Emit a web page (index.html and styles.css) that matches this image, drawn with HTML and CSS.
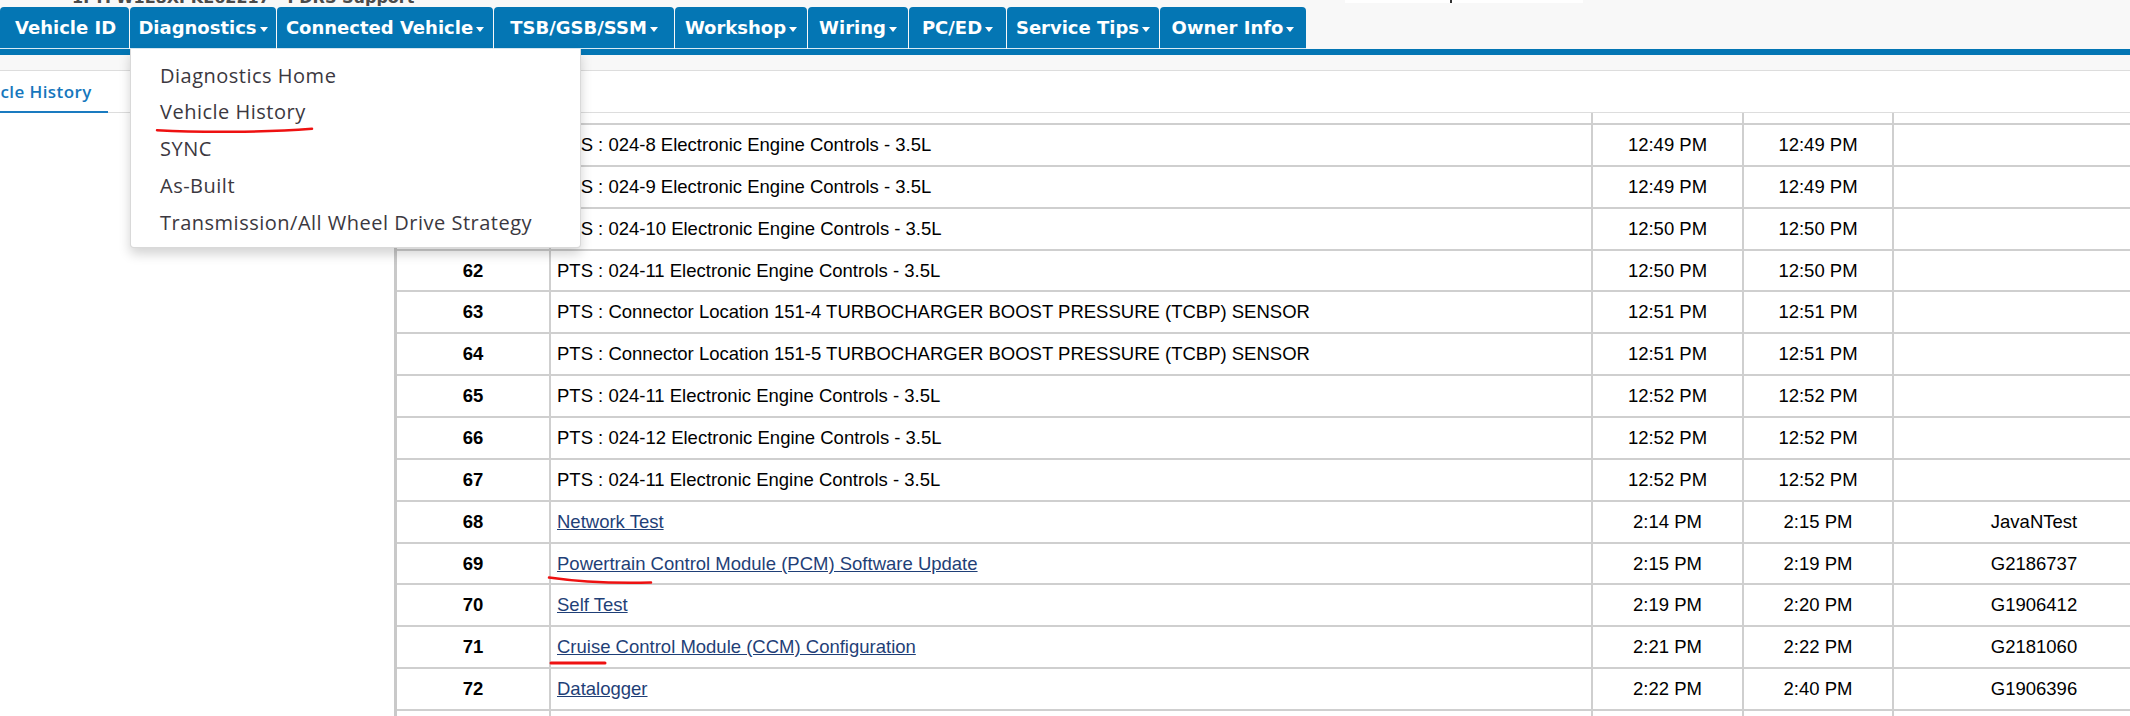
FILE: index.html
```html
<!DOCTYPE html>
<html lang="en">
<head>
<meta charset="utf-8">
<title>Vehicle History</title>
<link rel="stylesheet" href="styles.css">
</head>
<body>
<div class="page">
  <header class="top">
    <div class="topline">
      <span class="vin">1FTFW1E8XPKE62217 - PDRS Support</span>
      <span class="searchbox"></span>
    </div>
    <nav class="mainnav">
      <div class="tab first t-vid">Vehicle ID</div>
      <div class="tab open t-diag">Diagnostics<span class="caret"></span>
        <ul class="menu">
          <li>Diagnostics Home</li>
          <li>Vehicle History</li>
          <li>SYNC</li>
          <li>As-Built</li>
          <li>Transmission/All Wheel Drive Strategy</li>
        </ul>
      </div>
      <div class="tab t-conn">Connected Vehicle<span class="caret"></span></div>
      <div class="tab t-tsb">TSB/GSB/SSM<span class="caret"></span></div>
      <div class="tab t-work">Workshop<span class="caret"></span></div>
      <div class="tab t-wir">Wiring<span class="caret"></span></div>
      <div class="tab t-pced">PC/ED<span class="caret"></span></div>
      <div class="tab t-tips">Service Tips<span class="caret"></span></div>
      <div class="tab t-owner">Owner Info<span class="caret"></span></div>
    </nav>
    <div class="navrule"></div>
    <div class="subbar"></div>
  </header>

  <div class="tabstrip">
    <a class="subtab">Vehicle History</a>
  </div>

  <main class="content">
    <div class="side"></div>
    <div class="tablewrap">
      <table class="history">
        <colgroup>
          <col class="c-num"><col class="c-desc"><col class="c-time"><col class="c-time2"><col class="c-id">
        </colgroup>
        <tbody>
          <tr><td class="num">58</td><td class="desc">PTS : 024-7 Electronic Engine Controls - 3.5L</td><td>12:48 PM</td><td>12:48 PM</td><td></td></tr>
          <tr><td class="num">59</td><td class="desc">PTS : 024-8 Electronic Engine Controls - 3.5L</td><td>12:49 PM</td><td>12:49 PM</td><td></td></tr>
          <tr><td class="num">60</td><td class="desc">PTS : 024-9 Electronic Engine Controls - 3.5L</td><td>12:49 PM</td><td>12:49 PM</td><td></td></tr>
          <tr><td class="num">61</td><td class="desc">PTS : 024-10 Electronic Engine Controls - 3.5L</td><td>12:50 PM</td><td>12:50 PM</td><td></td></tr>
          <tr><td class="num">62</td><td class="desc">PTS : 024-11 Electronic Engine Controls - 3.5L</td><td>12:50 PM</td><td>12:50 PM</td><td></td></tr>
          <tr><td class="num">63</td><td class="desc">PTS : Connector Location 151-4 TURBOCHARGER BOOST PRESSURE (TCBP) SENSOR</td><td>12:51 PM</td><td>12:51 PM</td><td></td></tr>
          <tr><td class="num">64</td><td class="desc">PTS : Connector Location 151-5 TURBOCHARGER BOOST PRESSURE (TCBP) SENSOR</td><td>12:51 PM</td><td>12:51 PM</td><td></td></tr>
          <tr><td class="num">65</td><td class="desc">PTS : 024-11 Electronic Engine Controls - 3.5L</td><td>12:52 PM</td><td>12:52 PM</td><td></td></tr>
          <tr><td class="num">66</td><td class="desc">PTS : 024-12 Electronic Engine Controls - 3.5L</td><td>12:52 PM</td><td>12:52 PM</td><td></td></tr>
          <tr><td class="num">67</td><td class="desc">PTS : 024-11 Electronic Engine Controls - 3.5L</td><td>12:52 PM</td><td>12:52 PM</td><td></td></tr>
          <tr><td class="num">68</td><td class="desc"><a class="rec">Network Test</a></td><td>2:14 PM</td><td>2:15 PM</td><td>JavaNTest</td></tr>
          <tr><td class="num">69</td><td class="desc"><a class="rec">Powertrain Control Module (PCM) Software Update</a></td><td>2:15 PM</td><td>2:19 PM</td><td>G2186737</td></tr>
          <tr><td class="num">70</td><td class="desc"><a class="rec">Self Test</a></td><td>2:19 PM</td><td>2:20 PM</td><td>G1906412</td></tr>
          <tr><td class="num">71</td><td class="desc"><a class="rec">Cruise Control Module (CCM) Configuration</a></td><td>2:21 PM</td><td>2:22 PM</td><td>G2181060</td></tr>
          <tr><td class="num">72</td><td class="desc"><a class="rec">Datalogger</a></td><td>2:22 PM</td><td>2:40 PM</td><td>G1906396</td></tr>
          <tr><td class="num">73</td><td class="desc"><a class="rec">Self Test</a></td><td>2:41 PM</td><td>2:42 PM</td><td>G1906396</td></tr>
        </tbody>
      </table>
    </div>
  </main>

  <svg class="marks" width="2130" height="716" viewBox="0 0 2130 716" aria-hidden="true">
    <path d="M157 130.2 C 200 132.6, 262 132.6, 312 128.8" />
    <path d="M549 577.6 C 574 581.2, 612 583.6, 651 582.6" />
    <path class="thick" d="M551 663 L 605 663" />
  </svg>
</div>
</body>
</html>
```

FILE: styles.css
```css
html, body {
  margin: 0;
  padding: 0;
}

body {
  width: 2130px;
  height: 716px;
  overflow: hidden;
  background: #ffffff;
  font-family: "Liberation Sans", Arial, sans-serif;
}

.page {
  position: relative;
  height: 716px;
  overflow: hidden;
}

/* ---------- header ---------- */
.top {
  background: #f8f8f8;
}

.topline {
  height: 7px;
  overflow: hidden;
  display: flex;
  align-items: flex-start;
}

.vin {
  display: block;
  flex: none;
  width: 1345px;
  padding-left: 72px;
  box-sizing: border-box;
  margin-top: -12px;
  font: bold 16px/20px "DejaVu Sans", Verdana, sans-serif;
  color: #4a4a4a;
  white-space: nowrap;
}

.searchbox {
  display: block;
  flex: none;
  width: 238px;
  height: 3px;
  background: linear-gradient(#333, #333) 105px 0 / 2px 3px no-repeat, #ffffff;
}

.mainnav {
  display: flex;
  height: 42px;
}

.tab {
  position: relative;
  display: flex;
  align-items: center;
  justify-content: center;
  flex: none;
  box-sizing: border-box;
  height: 42px;
  padding: 0;
  margin-right: 1px;
  background: #0476b4;
  color: #ffffff;
  font: bold 18px "DejaVu Sans", Verdana, sans-serif;
  border-radius: 4px 4px 0 0;
  border-bottom: 1px solid rgba(255, 255, 255, 0.85);
  white-space: nowrap;
}

.tab.first {
  justify-content: flex-start;
  padding-left: 15px;
}

.t-vid { width: 129px; }
.t-diag { width: 146px; }
.t-conn { width: 216px; }
.t-tsb { width: 180px; }
.t-work { width: 132px; }
.t-wir { width: 100px; }
.t-pced { width: 97px; }
.t-tips { width: 152px; }
.t-owner { width: 146px; }

.caret {
  display: inline-block;
  width: 0;
  height: 0;
  margin-left: 3px;
  margin-top: 4px;
  border-top: 5px solid #ffffff;
  border-left: 4.5px solid transparent;
  border-right: 4.5px solid transparent;
}

.menu {
  position: absolute;
  top: calc(100% + 1px);
  left: 0;
  z-index: 10;
  width: 451px;
  box-sizing: border-box;
  margin: 0;
  padding: 8.5px 0 6px;
  list-style: none;
  background: #ffffff;
  border: 1px solid rgba(0, 0, 0, 0.15);
  border-top: 0;
  border-radius: 0 0 4px 4px;
  box-shadow: 0 6px 12px rgba(0, 0, 0, 0.175);
  font: 400 20px/36.8px "Open Sans", sans-serif;
  letter-spacing: 0.5px;
  color: #3b3840;
}

.menu li {
  padding-left: 29px;
}

.navrule {
  height: 6px;
  background: #0476b4;
}

.subbar {
  height: 15px;
  border-bottom: 1px solid #dddddd;
}

/* ---------- page tabs ---------- */
.tabstrip {
  display: flex;
  height: 41px;
  background: #ffffff;
  border-bottom: 1px solid #dddddd;
}

.subtab {
  display: flex;
  align-items: center;
  box-sizing: border-box;
  height: 42px;
  margin-bottom: -1px;
  margin-left: -53px;
  padding: 0 16px;
  border-bottom: 2px solid #1a7bc0;
  color: #1677bd;
  font: 600 17px "Open Sans", sans-serif;
  letter-spacing: 0.4px;
  white-space: nowrap;
}

/* ---------- content ---------- */
.content {
  display: flex;
  height: 603px;
}

.side {
  flex: none;
  width: 394px;
}

.tablewrap {
  flex: 1;
  overflow: hidden;
  border-left: 3px solid #c9c9c9;
}

.history {
  border-collapse: separate;
  border-spacing: 0;
  table-layout: fixed;
  width: 1779px;
  margin-top: -29.86px;
  font-size: 18.5px;
  color: #000000;
}

.c-num { width: 154px; }
.c-desc { width: 1042px; }
.c-time { width: 151px; }
.c-time2 { width: 150px; }
.c-id { width: 282px; }

.history td {
  box-sizing: border-box;
  height: 41.86px;
  padding: 0 6px;
  border-right: 2px solid #cfcfcf;
  border-bottom: 2px solid #cfcfcf;
  text-align: center;
  vertical-align: middle;
  white-space: nowrap;
}

.history td.num {
  font-weight: bold;
}

.history td.desc {
  text-align: left;
}

.rec {
  color: #1f3f77;
  text-decoration: underline;
}

/* ---------- annotation marks ---------- */
.marks {
  position: absolute;
  left: 0;
  top: 0;
  z-index: 20;
  pointer-events: none;
}

.marks path {
  fill: none;
  stroke: #ee1111;
  stroke-width: 2.5;
  stroke-linecap: round;
}

.marks path.thick {
  stroke-width: 3;
}
```
